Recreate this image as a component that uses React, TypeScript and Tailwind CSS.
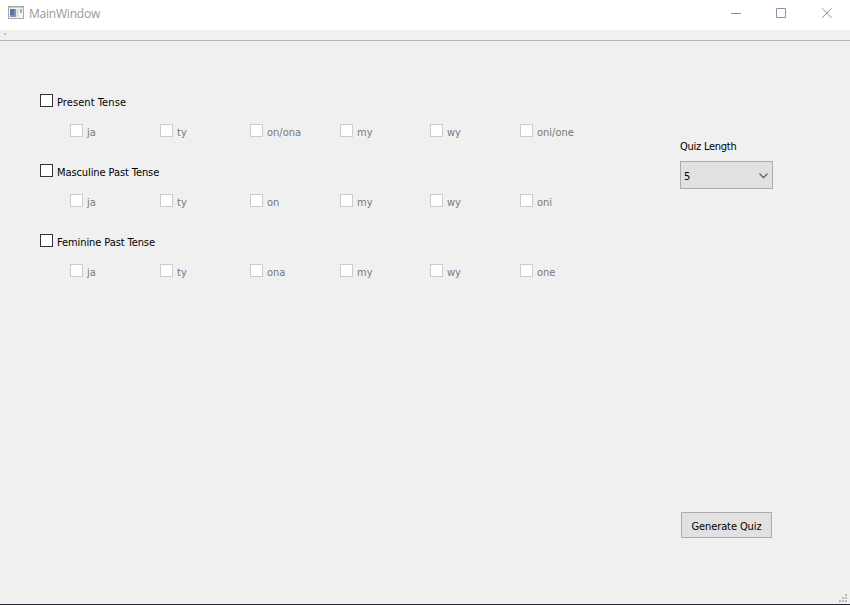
import React from "react";

const groups = [
  { title: "Present Tense", tracking: "tracking-[0.08px]", items: ["ja", "ty", "on/ona", "my", "wy", "oni/one"] },
  { title: "Masculine Past Tense", tracking: "tracking-[-0.09px]", items: ["ja", "ty", "on", "my", "wy", "oni"] },
  { title: "Feminine Past Tense", tracking: "tracking-[-0.09px]", items: ["ja", "ty", "ona", "my", "wy", "one"] },
];

function TitleBar() {
  return (
    <header className="flex h-[30px] shrink-0 items-start bg-white text-[#999999]">
      <svg className="ml-2 mt-[6px] h-[14px] w-4" viewBox="0 0 16 14" shapeRendering="crispEdges">
        <rect x="0.5" y="0.5" width="15" height="12" fill="#f4f4f4" stroke="#a6aaa6" />
        <rect x="1" y="1" width="14" height="1" fill="#c9cdc9" />
        <rect x="2" y="3" width="6" height="8" fill="#8293b8" />
        <rect x="2" y="3" width="4" height="6" fill="#6071a0" />
        <rect x="8" y="3" width="3" height="8" fill="#dfe1e6" />
        <rect x="12" y="3" width="2" height="4" fill="#8fb0cf" />
      </svg>
      <span className="ml-[5px] mt-[5px] font-['Open_Sans','Noto_Sans',sans-serif] text-[12px] leading-[18px] tracking-[-0.22px]">
        MainWindow
      </span>
      <svg className="ml-auto mr-[17px] mt-2 h-[11px] w-[102px]" viewBox="0 0 102 11" fill="none" stroke="#8f90a6">
        <path d="M0 5.5h10" />
        <path d="M45.5 0.5h9v9h-9z" />
        <path d="M91 0.3l9.6 9.6M100.6 0.3l-9.6 9.6" />
      </svg>
    </header>
  );
}

export default function App() {
  return (
    <div className="flex h-[605px] w-[850px] flex-col overflow-hidden border-b border-[#2b2530] bg-[#f0f0f0] font-['DejaVu_Sans_Condensed','DejaVu_Sans',sans-serif] text-[11px] leading-[14px] text-black">
      <TitleBar />
      <div className="h-[11px] shrink-0 border-b border-[#b4b4b4] pl-1 pt-[3px]">
        <div className="h-[2px] w-[2px] bg-[#c0c0c0]" />
      </div>
      <main className="flex min-h-0 flex-1">
        <section className="ml-10 flex w-[640px] flex-col pt-[53px]">
          {groups.map((group) => (
            <div key={group.title} className="h-[70px]">
              <label className="flex h-[30px] items-start">
                <span className="h-[13px] w-[13px] border border-[#333333] bg-white" />
                <span className={`ml-1 mt-[2px] ${group.tracking}`}>{group.title}</span>
              </label>
              <div className="ml-[30px] flex">
                {group.items.map((item) => (
                  <label key={item} className="flex w-[90px] items-start text-[#787878]">
                    <span className="h-[13px] w-[13px] border border-[#cccccc] bg-white" />
                    <span className="ml-1 mt-[2px]">{item}</span>
                  </label>
                ))}
              </div>
            </div>
          ))}
        </section>
        <aside className="flex w-[93px] flex-col pt-[99px]">
          <span className="whitespace-nowrap tracking-[-0.25px]">Quiz Length</span>
          <div className="mt-[7px] flex h-7 items-center justify-between border border-[#adadad] bg-[#e1e1e1] pl-[3px] pr-1">
            <span className="mt-[3px]">5</span>
            <svg className="mt-[2px] h-[6px] w-[9px]" viewBox="0 0 9 6" fill="none" stroke="#505050" strokeWidth="1.2">
              <path d="M0.5 0.7l4 4 4-4" />
            </svg>
          </div>
          <button className="ml-px mt-[323px] h-[26px] w-[91px] whitespace-nowrap border border-[#adadad] bg-[#e1e1e1] pt-[3px] tracking-[-0.1px]">
            Generate Quiz
          </button>
        </aside>
      </main>
      <footer className="flex h-[10px] shrink-0 justify-end pr-[3px]">
        <svg className="h-2 w-2" viewBox="0 0 8 8" fill="#b8b8b8" shapeRendering="crispEdges">
          <path d="M6 0h2v2h-2zM3 3h2v2h-2zM6 3h2v2h-2zM0 6h2v2h-2zM3 6h2v2h-2zM6 6h2v2h-2z" />
        </svg>
      </footer>
    </div>
  );
}
